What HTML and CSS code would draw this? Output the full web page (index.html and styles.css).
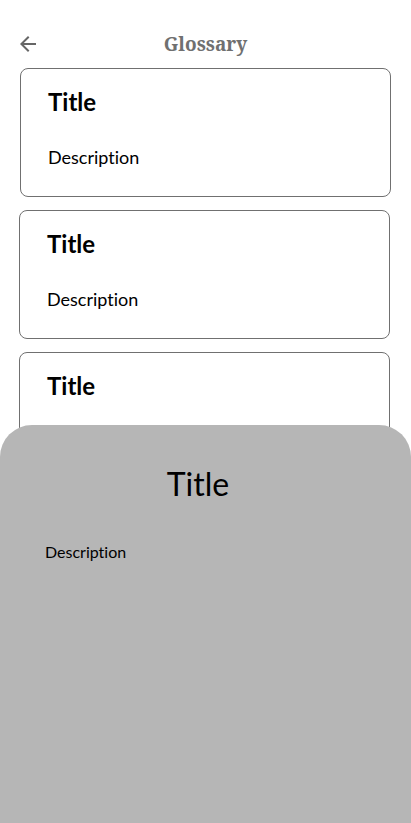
FILE: index.html
```html
<!DOCTYPE html>
<html lang="en">
<head>
<meta charset="utf-8">
<meta name="viewport" content="width=device-width, initial-scale=1">
<title>Glossary</title>
<link rel="stylesheet" href="styles.css">
</head>
<body>
<header class="topbar">
  <button class="back" type="button" aria-label="Back">
    <svg viewBox="0 0 16 16" width="16" height="16" aria-hidden="true"><path d="M16 7H3.83l5.59-5.59L8 0 0 8l8 8 1.41-1.41L3.83 9H16z" fill="currentColor"/></svg>
  </button>
  <h1 class="heading">Glossary</h1>
</header>
<main class="list">
  <article class="card card-first"><h2 class="card-title">Title</h2><p class="card-text">Description</p></article>
  <article class="card"><h2 class="card-title">Title</h2><p class="card-text">Description</p></article>
  <article class="card"><h2 class="card-title">Title</h2></article>
</main>
<section class="sheet">
  <h2 class="sheet-title">Title</h2>
  <p class="sheet-text">Description</p>
</section>
</body>
</html>
```

FILE: styles.css
```css
* { box-sizing: border-box; }
body {
  margin: 0;
  min-height: 100vh;
  display: flex;
  flex-direction: column;
  background: #fff;
  color: #000;
  font-family: Lato, sans-serif;
  font-variant-ligatures: none;
}
h1, h2, p { margin: 0; }
.topbar {
  display: grid;
  grid-template-columns: 16px 1fr 16px;
  align-items: center;
  padding: 32px 20px 12px;
}
.back {
  display: flex;
  padding: 0;
  border: 0;
  background: none;
  color: #666;
}
.heading {
  color: #707070;
  font: bold 19px/24px "Noto Serif", "DejaVu Serif", serif;
  text-align: center;
}
.list {
  display: flex;
  flex-direction: column;
  gap: 13px;
  padding: 0 21px 0 19px;
}
.card {
  min-height: 129px;
  padding: 17px 27px;
  border: 1px solid #707070;
  border-radius: 8px;
}
.card-first { margin: 0 -1px 0 1px; }
.card-title { font-size: 24px; line-height: 32px; font-weight: 700; }
.card-text { margin-top: 27px; font-size: 18px; line-height: 24px; }
/* The sheet slides up over the end of the list. */
.sheet {
  position: relative;
  flex: 1;
  margin-top: -56px;
  padding: 39px 60px 40px 45px;
  border-radius: 32px 32px 0 0;
  background: #b6b6b6;
}
.sheet-title { font-size: 32px; line-height: 40px; font-weight: 400; text-align: center; }
.sheet-text { margin-top: 36px; font-size: 16px; line-height: 24px; }
```
